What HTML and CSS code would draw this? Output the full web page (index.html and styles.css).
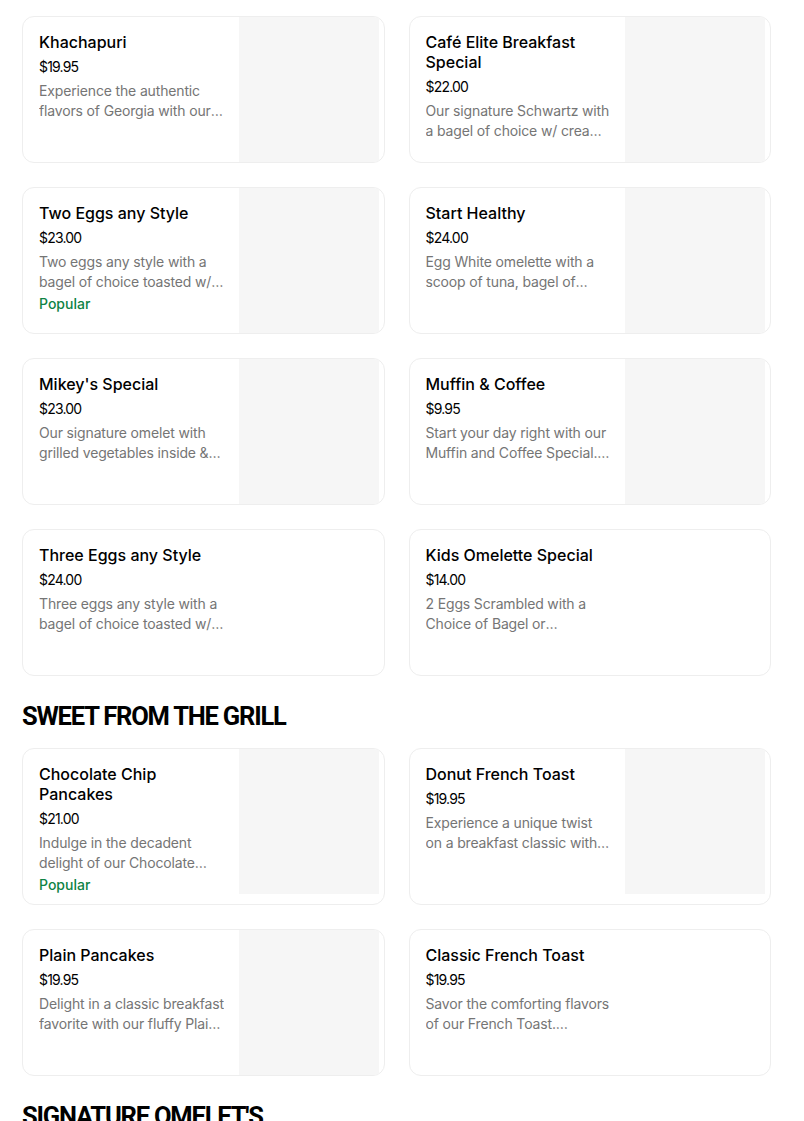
FILE: index.html
```html
<!DOCTYPE html>
<html lang="en">
<head>
<meta charset="utf-8">
<title>Menu</title>
<link rel="stylesheet" href="styles.css">
</head>
<body>
<main class="menu">
  <section class="section">
    <div class="grid">
      <article class="card">
        <div class="info">
          <h3 class="title">Khachapuri</h3>
          <div class="price">$19.95</div>
          <p class="desc">Experience the authentic flavors of Georgia with our signature Khachapuri, a cheese-filled bread baked to perfection.</p>
        </div>
        <div class="thumb"></div>
      </article>
      <article class="card">
        <div class="info">
          <h3 class="title">Café Elite Breakfast Special</h3>
          <div class="price">$22.00</div>
          <p class="desc">Our signature Schwartz with a bagel of choice w/ cream cheese, coffee and juice.</p>
        </div>
        <div class="thumb"></div>
      </article>
      <article class="card">
        <div class="info">
          <h3 class="title">Two Eggs any Style</h3>
          <div class="price">$23.00</div>
          <p class="desc">Two eggs any style with a bagel of choice toasted w/ butter or cream cheese.</p>
          <div class="popular">Popular</div>
        </div>
        <div class="thumb"></div>
      </article>
      <article class="card">
        <div class="info">
          <h3 class="title">Start Healthy</h3>
          <div class="price">$24.00</div>
          <p class="desc">Egg White omelette with a scoop of tuna, bagel of choice and fresh fruit.</p>
        </div>
        <div class="thumb"></div>
      </article>
      <article class="card">
        <div class="info">
          <h3 class="title">Mikey's Special</h3>
          <div class="price">$23.00</div>
          <p class="desc">Our signature omelet with grilled vegetables inside &amp; cheese on top, served with a bagel.</p>
        </div>
        <div class="thumb"></div>
      </article>
      <article class="card">
        <div class="info">
          <h3 class="title">Muffin &amp; Coffee</h3>
          <div class="price">$9.95</div>
          <p class="desc">Start your day right with our Muffin and Coffee Special. A freshly baked muffin of your choice.</p>
        </div>
        <div class="thumb"></div>
      </article>
      <article class="card">
        <div class="info">
          <h3 class="title">Three Eggs any Style</h3>
          <div class="price">$24.00</div>
          <p class="desc">Three eggs any style with a bagel of choice toasted w/ butter or cream cheese.</p>
        </div>
      </article>
      <article class="card">
        <div class="info">
          <h3 class="title">Kids Omelette Special</h3>
          <div class="price">$14.00</div>
          <p class="desc">2 Eggs Scrambled with a Choice of Bagel or Sectioned Toast and a juice.</p>
        </div>
      </article>
    </div>
  </section>

  <section class="section">
    <h2 class="heading">SWEET FROM THE GRILL</h2>
    <div class="grid">
      <article class="card">
        <div class="info">
          <h3 class="title">Chocolate Chip Pancakes</h3>
          <div class="price">$21.00</div>
          <p class="desc">Indulge in the decadent delight of our Chocolate Chip Pancakes, fluffy and golden.</p>
          <div class="popular">Popular</div>
        </div>
        <div class="thumb"></div>
      </article>
      <article class="card">
        <div class="info">
          <h3 class="title">Donut French Toast</h3>
          <div class="price">$19.95</div>
          <p class="desc">Experience a unique twist on a breakfast classic with our Donut French Toast.</p>
        </div>
        <div class="thumb"></div>
      </article>
      <article class="card">
        <div class="info">
          <h3 class="title">Plain Pancakes</h3>
          <div class="price">$19.95</div>
          <p class="desc">Delight in a classic breakfast favorite with our fluffy Plain Pancakes.</p>
        </div>
        <div class="thumb"></div>
      </article>
      <article class="card">
        <div class="info">
          <h3 class="title">Classic French Toast</h3>
          <div class="price">$19.95</div>
          <p class="desc">Savor the comforting flavors of our French Toast. Perfectly golden and sweet.</p>
        </div>
      </article>
    </div>
  </section>

  <section class="section">
    <h2 class="heading">SIGNATURE OMELET'S</h2>
  </section>
</main>
</body>
</html>
```

FILE: styles.css
```css
* {
  box-sizing: border-box;
}

html, body {
  margin: 0;
  padding: 0;
  background: #ffffff;
}

body {
  font-family: Inter, "Noto Sans", "Liberation Sans", sans-serif;
  color: #000000;
}

.menu {
  width: 804px;
  padding: 16px 33px 0 22px;
}

.section + .section {
  margin-top: 24px;
}

.heading {
  margin: 0 0 16px;
  font-family: Roboto, Inter, "Liberation Sans", sans-serif;
  font-size: 25.5px;
  line-height: 32px;
  font-weight: 700;
  letter-spacing: -1.2px;
  color: #000000;
}

.grid {
  display: grid;
  grid-template-columns: 1fr 1fr;
  column-gap: 24px;
  row-gap: 24px;
}

.card {
  display: flex;
  align-items: flex-start;
  min-height: 147px;
  border: 1px solid #eeeeee;
  border-radius: 12px;
  overflow: hidden;
  background: #ffffff;
}

.info {
  flex: 0 0 215px;
  width: 215px;
  padding: 15px 14px 9px 16px;
}

.thumb {
  flex: 0 0 140px;
  width: 140px;
  height: 145px;
  margin-left: auto;
  margin-right: 5px;
  background: #f6f6f6;
}

.title {
  margin: 0;
  font-size: 16px;
  line-height: 20px;
  font-weight: 500;
  letter-spacing: 0;
  color: #000000;
}

.price {
  margin-top: 5px;
  font-size: 14px;
  line-height: 20px;
  letter-spacing: -0.8px;
  color: #000000;
}

.desc {
  margin: 4px 0 0;
  font-size: 14px;
  line-height: 20px;
  letter-spacing: -0.15px;
  color: #757575;
  display: -webkit-box;
  -webkit-line-clamp: 2;
  -webkit-box-orient: vertical;
  overflow: hidden;
}

.popular {
  margin-top: 2px;
  font-size: 14px;
  line-height: 20px;
  font-weight: 500;
  color: #0e8345;
}
```
